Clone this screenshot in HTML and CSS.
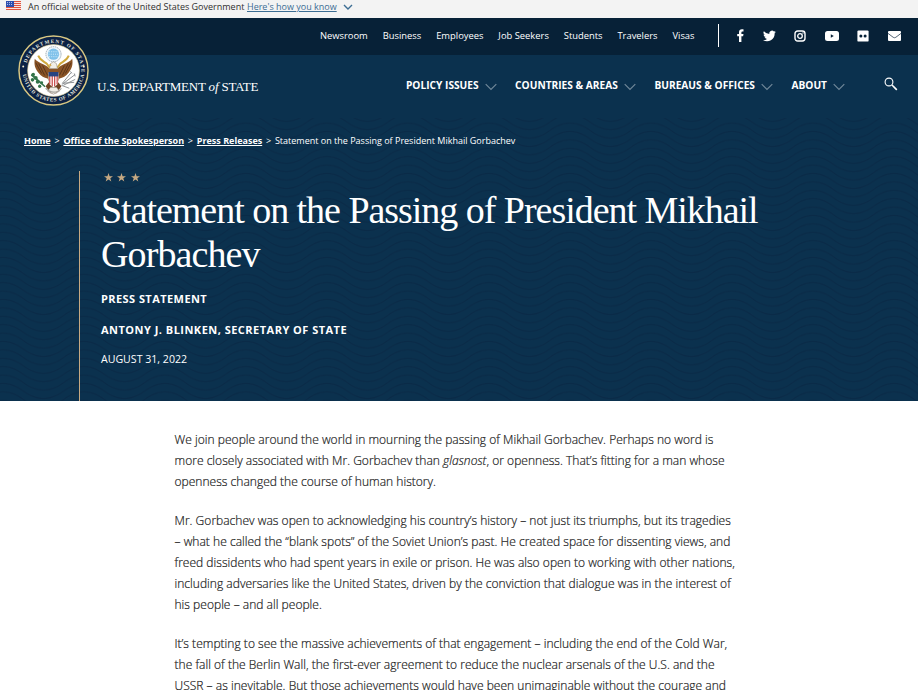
FILE: index.html
```
<!DOCTYPE html>
<html lang="en">
<head>
<meta charset="utf-8">
<title>Statement on the Passing of President Mikhail Gorbachev</title>
<link rel="stylesheet" href="styles.css">
</head>
<body>
<div class="gov">
  <svg class="flag" width="15" height="9" viewBox="0 0 15 9"><path fill="#fbe3df" d="M0 0h15v9H0z"/><path stroke="#e0543f" stroke-width="1" d="M0 .5h15M0 2.500h15M0 4.500h15M0 6.500h15M0 8.500h15"/><path fill="#2d4fae" d="M0 0h8v6H0z"/><path stroke="#aebbe8" stroke-dasharray="1 1" d="M1 1.500h6M1 3.500h6"/></svg>
  <span class="gov-text">An official website of the United States Government</span>
  <a class="gov-link">Here's how you know</a>
  <svg class="gov-chev" width="10" height="7" viewBox="0 0 10 7"><path d="M1 1l4 4 4-4" fill="none" stroke="#3c6d93" stroke-width="1.4"/></svg>
</div>
<header class="header">
  <div class="topbar">
    <nav class="util">
      <a>Newsroom</a><a>Business</a><a>Employees</a><a>Job Seekers</a><a>Students</a><a>Travelers</a><a>Visas</a>
    </nav>
    <div class="social">
      <svg width="7" height="13" viewBox="0 0 7 13"><path fill="#fff" d="M2 13V7.200H.2V4.900H2V3.200C2 1.300 3.100.3 4.900.3c.8 0 1.600.1 1.600.1v2h-.9c-.9 0-1.200.5-1.200 1.100v1.400h2.100l-.4 2.300H4.400V13z"/></svg>
      <svg width="13" height="12" viewBox="0 0 24 20"><path fill="#fff" d="M24 2.400a10 10 0 0 1-2.800.8A5 5 0 0 0 23.300.5a10 10 0 0 1-3.100 1.200 4.900 4.900 0 0 0-8.400 4.500A14 14 0 0 1 1.700 1a4.900 4.900 0 0 0 1.500 6.600 4.900 4.900 0 0 1-2.200-.6 4.900 4.900 0 0 0 4 4.900 5 5 0 0 1-2.300.1 4.900 4.900 0 0 0 4.600 3.400A9.900 9.900 0 0 1 0 17.500 14 14 0 0 0 21.500 5z"/></svg>
      <svg width="12" height="12" viewBox="0 0 12 12"><rect x="1" y="1" width="10" height="10" rx="2.700" fill="none" stroke="#fff" stroke-width="1.400"/><circle cx="6" cy="6" r="2.300" fill="none" stroke="#fff" stroke-width="1.300"/><circle cx="9" cy="3" r=".7" fill="#fff"/></svg>
      <svg width="14" height="10" viewBox="0 0 14 10"><rect width="14" height="10" rx="2.500" fill="#fff"/><path fill="#072137" d="M5.800 3.300v3.400l3-1.700z"/></svg>
      <svg width="12" height="12" viewBox="0 0 12 12"><rect x=".4" y=".4" width="11.200" height="11.200" rx="1.200" fill="#fff"/><circle cx="3.900" cy="6" r="1.500" fill="#072137"/><circle cx="8.100" cy="6" r="1.500" fill="#072137"/></svg>
      <svg width="13" height="10" viewBox="0 0 13 10"><rect width="13" height="10" rx="1" fill="#fff"/><path d="M0 2.400l5.200 3.900q1.300.9 2.600 0L13 2.400" fill="none" stroke="#405366" stroke-width=".9"/></svg>
    </div>
  </div>
  <div class="mainbar">
    <a class="brand">
      <svg class="seal" width="71" height="71" viewBox="0 0 72 72">
        <defs>
          <path id="arc-top" d="M8.500 41.300A28 28 0 1 1 63.500 41.300"/>
          <path id="arc-bottom" d="M4.700 36A31.300 31.300 0 0 0 67.300 36"/>
        </defs>
        <circle cx="36" cy="36" r="35" fill="#0b2145" stroke="#d8c782" stroke-width="1.500"/>
        <circle cx="36" cy="36" r="26.300" fill="#fff" stroke="#d6c688" stroke-width=".6"/>
        <text class="seal-text"><textPath href="#arc-top" startOffset="13" textLength="82">DEPARTMENT OF STATE</textPath></text>
        <text class="seal-text"><textPath href="#arc-bottom" startOffset="4" textLength="90">UNITED STATES OF AMERICA</textPath></text>
        <circle cx="5.300" cy="32" r="1" fill="#f5f0d4"/><circle cx="66.700" cy="32" r="1" fill="#f5f0d4"/>
        <circle cx="36" cy="19.500" r="7.700" fill="#eef6fc" stroke="#8c9aa5" stroke-width=".8" stroke-dasharray="1.500 .7"/>
        <circle cx="36" cy="19.500" r="5.700" fill="#7fc1ea"/>
        <path stroke="#d4ecfa" stroke-width="1" stroke-dasharray="1 1.200" d="M31.500 17h9M31 19.500h10M31.500 22h9"/>
        <path fill="#8a5426" d="M17 24c2 2.500 5 4 8 5.500 3 1.500 5 2.500 7 4.500h8c2-2 4-3 7-4.500 3-1.500 6-3 8-5.500 1 6-.5 10-3.500 14-3 4-6 5.500-9.500 6l-2 5h-8l-2-5c-3.500-.5-6.500-2-9.500-6-3-4-4.500-8-3.500-14z"/>
        <path fill="none" stroke="#4b2c19" stroke-width=".8" d="M18 28l6 11M21 29l6 12M25 31l5 10M54 28l-6 11M51 29l-6 12M47 31l-5 10"/>
        <path fill="none" stroke="#d0a93d" stroke-width="2" d="M20.500 21c2 5 6 6 9 8.500l3 4M51.500 21c-2 5-6 6-9 8.500l-3 4"/>
        <path fill="#6f4220" d="M32 47h8l4 5-5 7h-6l-5-7z"/>
        <path fill="#f1eee6" stroke="#93887c" stroke-width=".6" d="M33 29l3-2 3 2 1 5h-8zM33 53h6l3 4-6 3-6-3z"/>
        <path fill="#d8a43a" d="M33 29l-2 1.600 3 .8z"/>
        <path fill="#fff" d="M31 38h10v9c0 3-3 5-5 6-2-1-5-3-5-6z"/>
        <path stroke="#c5403f" stroke-width="1.200" d="M32.200 41v9M34.700 41v11M37.200 41v11M39.700 41v9"/>
        <path fill="#264582" d="M31 37.500h10v4.500H31z"/>
        <g fill="#32734a"><circle cx="15.500" cy="40" r="1.700"/><circle cx="18" cy="43.500" r="2"/><circle cx="14.700" cy="45.500" r="1.800"/><circle cx="20" cy="47.500" r="2"/><circle cx="22" cy="52" r="1.700"/><circle cx="24" cy="48.500" r="1.500"/><path d="M14 39l14 13-1 1-14-12z"/></g>
        <path stroke="#8d9194" stroke-width="1" d="M45 50l13-10M45 49l9-11M46 51l12-6M45 49l12-1M44 51l8 3M57 39l1 3M53 37l2 2"/>
        <path fill="none" stroke="#a6a39c" stroke-width="1.200" d="M28 54c3 3 5 4 8 4s6-1 8-4"/>
      </svg>
      <span class="brand-name">U.S. DEPARTMENT <i>of</i> STATE</span>
    </a>
    <nav class="menu">
      <a><span>POLICY ISSUES</span><svg width="12" height="8" viewBox="0 0 12 8"><path d="M.7 1.200L6 6.500l5.300-5.300" /></svg></a>
      <a><span>COUNTRIES &amp; AREAS</span><svg width="12" height="8" viewBox="0 0 12 8"><path d="M.7 1.200L6 6.500l5.300-5.300" /></svg></a>
      <a><span>BUREAUS &amp; OFFICES</span><svg width="12" height="8" viewBox="0 0 12 8"><path d="M.7 1.200L6 6.500l5.300-5.300" /></svg></a>
      <a><span>ABOUT</span><svg width="12" height="8" viewBox="0 0 12 8"><path d="M.7 1.200L6 6.500l5.300-5.300" /></svg></a>
    </nav>
    <svg class="search" width="14" height="14" viewBox="0 0 14 14"><circle cx="5" cy="5" r="3.900" fill="none" stroke="#fff" stroke-width="1.100"/><path d="M8 8l1.500 1.500" stroke="#fff" stroke-width="1.100"/><path d="M9 9l3.800 3.800" stroke="#fff" stroke-width="1.700"/></svg>
  </div>
</header>
<section class="hero">
  <svg class="waves" width="918" height="283" aria-hidden="true">
    <defs><pattern id="wave" width="81" height="8.400" patternUnits="userSpaceOnUse" x="3"><path d="M-20.250 -21Q0 -36 20.250 -21T60.750 -21T101.250 -21M-20.250 -12.600Q0 -27.600 20.250 -12.600T60.750 -12.600T101.250 -12.600M-20.250 -4.200Q0 -19.200 20.250 -4.200T60.750 -4.200T101.250 -4.200M-20.250 4.200Q0 -10.800 20.250 4.200T60.750 4.200T101.250 4.200M-20.250 12.600Q0 -2.400 20.250 12.600T60.750 12.600T101.250 12.600M-20.250 21Q0 6 20.250 21T60.750 21T101.250 21" fill="none" stroke="#0a2b48" stroke-width="1.200"/></pattern></defs>
    <rect width="918" height="283" fill="url(#wave)"/>
  </svg>
  <nav class="crumbs"><a>Home</a><span>&gt;</span><a>Office of the Spokesperson</a><span>&gt;</span><a>Press Releases</a><span>&gt;</span><em>Statement on the Passing of President Mikhail Gorbachev</em></nav>
  <div class="heading">
    <div class="stars"><svg width="36" height="9" viewBox="0 0 36 9" fill="#c6a983"><path id="star" d="M4.500 0l1.100 3.300H9L6.300 5.300l1 3.300-2.800-2-2.800 2 1-3.300L0 3.300h3.400z"/><use href="#star" x="13"/><use href="#star" x="27"/></svg></div>
    <h1><span class="t1">Statement on the Passing of President Mikhail</span><span class="t2">Gorbachev</span></h1>
    <p class="kind">PRESS STATEMENT</p>
    <p class="author">ANTONY J. BLINKEN, SECRETARY OF STATE</p>
    <p class="date">AUGUST 31, 2022</p>
  </div>
</section>
<main class="article">
  <p>We join people around the world in mourning the passing of Mikhail Gorbachev. Perhaps no word is<br>more closely associated with Mr. Gorbachev than <i>glasnost</i>, or openness. That’s fitting for a man whose<br>openness changed the course of human history.</p>
  <p>Mr. Gorbachev was open to acknowledging his country’s history – not just its triumphs, but its tragedies<br>– what he called the “blank spots” of the Soviet Union’s past. He created space for dissenting views, and<br>freed dissidents who had spent years in exile or prison. He was also open to working with other nations,<br>including adversaries like the United States, driven by the conviction that dialogue was in the interest of<br>his people – and all people.</p>
  <p>It’s tempting to see the massive achievements of that engagement – including the end of the Cold War,<br>the fall of the Berlin Wall, the first-ever agreement to reduce the nuclear arsenals of the U.S. and the<br>USSR – as inevitable. But those achievements would have been unimaginable without the courage and</p>
</main>
</body>
</html>
```
FILE: styles.css
```
* { box-sizing: border-box; }
body { margin: 0; height: 690px; overflow: hidden; background: #fff; color: #1a1a1a; font-family: "Open Sans", "Noto Sans", sans-serif; white-space: nowrap; }
svg { display: block; flex: none; }
.gov { height: 18px; padding: 0 6px; display: flex; align-items: flex-start; background: #f3f3f3; font-size: 9px; line-height: 14px; color: #2e2e2e; }
.flag { margin-top: 1px; }
.gov-text { margin-left: 7px; width: 219px; }
.gov-link { color: #3c6d93; text-decoration: underline; width: 90px; }
.gov-chev { margin: 4px 0 0 6px; }
.header { background: #0b314e; }
.topbar { height: 37px; background: #072137; display: flex; align-items: center; justify-content: flex-end; padding: 0 17px 2px 0; color: #fff; }
.util { display: flex; gap: 14.900px; font-size: 9.400px; padding-right: 23px; border-right: 1px solid #fff; line-height: 23px; }
.social { display: flex; align-items: center; padding-left: 18.500px; gap: 18.600px; }
.mainbar { height: 63px; display: flex; color: #fff; }
.brand { display: flex; padding-left: 18px; }
.seal { margin-top: -20px; }
.seal-text { font: 700 5.200px "Liberation Serif", serif; fill: #e5e7df; }
.brand-name { margin: 23px 0 0 8px; font: 13px/18px "Liberation Serif", serif; letter-spacing: -.2px; }
.menu { margin-left: auto; display: flex; gap: 18.500px; font-size: 10.180px; font-weight: 700; line-height: 16px; padding: 22px 0 0; }
.menu a { display: flex; }
.menu svg { margin: 6px 0 0 6px; fill: none; stroke: #6f8798; stroke-width: 1.200; }
.search { margin: 22px 20px 0 39px; }
.hero { height: 283px; background: #0b314e; color: #fff; position: relative; }
.waves { position: absolute; left: 0; top: 0; }
.crumbs { position: relative; height: 53px; padding: 14px 0 0 24px; display: flex; gap: 3.800px; font-size: 9px; line-height: 17px; }
.crumbs a { font-weight: 700; text-decoration: underline; }
.crumbs em { font-style: normal; }
.heading { position: relative; margin-left: 79px; height: 230px; border-left: 1px solid #c6a983; padding-left: 21px; }
.stars { padding: 2px 0 0 3px; height: 17px; }
h1 { margin: 0; font: 400 38px/44px "Liberation Serif", serif; height: 87px; }
h1 span { display: block; }
.t1 { letter-spacing: -1.030px; }
.t2 { letter-spacing: -.9px; }
.heading p { margin: 0; font-size: 11px; line-height: 16px; }
.heading .kind { padding-top: 16px; font-weight: 700; letter-spacing: .430px; }
.heading .author { padding-top: 15px; font-weight: 700; letter-spacing: .480px; }
.heading .date { padding-top: 13px; font-size: 10.600px; }
.article { padding: 28px 0 0 174.500px; font-size: 12px; font-weight: 300; letter-spacing: .026px; -webkit-text-stroke: .2px #1a1a1a; line-height: 21px; }
.article p { margin: 0 0 18px; }
```
